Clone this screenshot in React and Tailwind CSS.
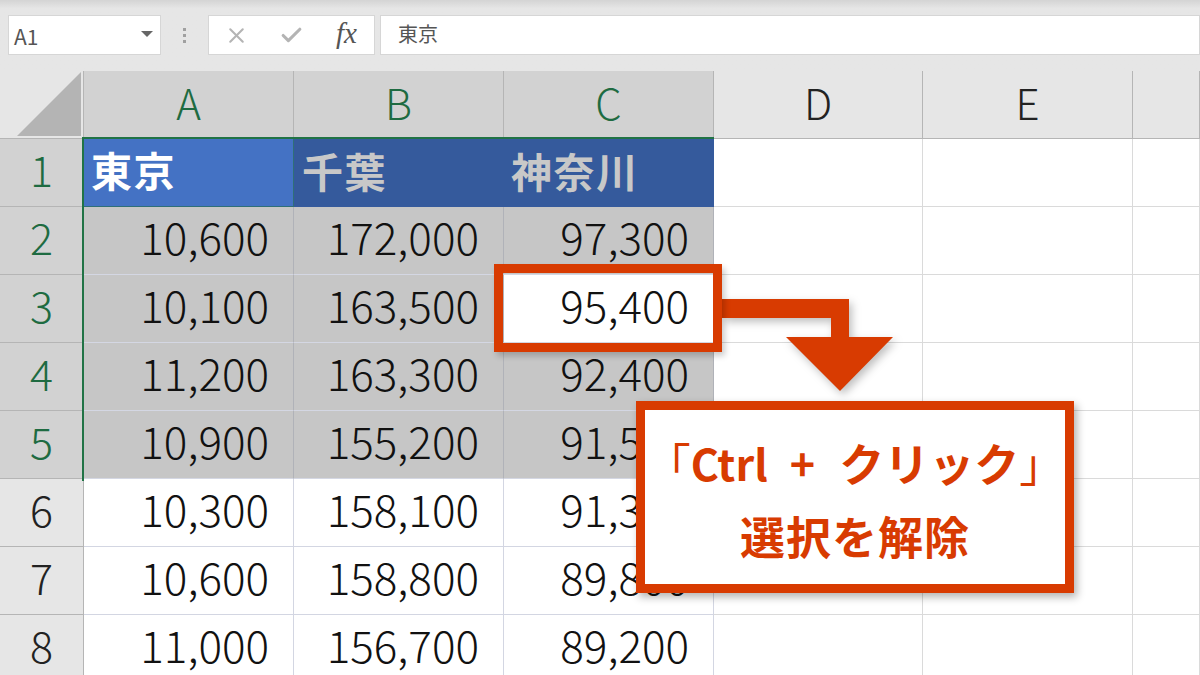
import React from "react";
import { X, Check } from "lucide-react";

const jp = "font-['Noto_Sans_CJK_JP','Noto_Sans',sans-serif]";

const rows = [
  ["10,600", "172,000", "97,300"],
  ["10,100", "163,500", "95,400"],
  ["11,200", "163,300", "92,400"],
  ["10,900", "155,200", "91,500"],
  ["10,300", "158,100", "91,300"],
  ["10,600", "158,800", "89,800"],
  ["11,000", "156,700", "89,200"],
];

const Num = ({ value, selected, white }) => (
  <div
    className={`flex items-center justify-end pr-[24px] pb-[9px] text-[44px] leading-none text-[#111] font-light border-b border-r ${
      selected && !white
        ? "bg-[#c6c6c6] border-b-[#d4d7e3] border-r-[#b0b2b8]"
        : "bg-white border-[#d3d6e2]"
    }`}
  >
    {value}
  </div>
);

const Blank = () => <div className="bg-white border-b border-r border-[#dadada]" />;

const ColHead = ({ label, selected }) => (
  <div
    className={`flex items-center justify-center pb-[6px] text-[42px] leading-none font-light border-r border-b ${
      selected
        ? "bg-[#d2d2d2] text-[#1e6b41] border-[#b5b5b5]"
        : "bg-[#e6e6e6] text-[#222] border-[#b5b5b5]"
    }`}
  >
    {label}
  </div>
);

const RowHead = ({ label, selected }) => (
  <div
    className={`flex items-center justify-center pb-[8px] text-[43px] leading-none font-light border-r border-b border-[#b5b5b5] ${
      selected ? "bg-[#d2d2d2] text-[#1e6b41]" : "bg-[#e6e6e6] text-[#222]"
    }`}
  >
    {label}
  </div>
);

export default function App() {
  return (
    <div className={`relative w-[1200px] h-[675px] overflow-hidden bg-[#e6e6e6] ${jp}`}>
      {/* formula bar */}
      <div className="h-[71px] pt-[15px] bg-gradient-to-b from-[#d4d4d4] from-0% to-[#e6e6e6] to-[12%] flex items-start">
        <div className="ml-[8px] w-[153px] h-[40px] bg-white border border-[#d6d6d6] flex items-center justify-between pl-[5px] pr-[7px]">
          <span className="text-[21px] text-[#555] pt-[3px]">A1</span>
          <span className="w-0 h-0 border-x-[6px] border-x-transparent border-t-[6px] border-t-[#666] mb-[3px]" />
        </div>
        <div className="w-[47px] h-[40px] flex flex-col items-center justify-center gap-[3px]">
          <span className="w-[3px] h-[3px] bg-[#a0a0a0]" />
          <span className="w-[3px] h-[3px] bg-[#a0a0a0]" />
          <span className="w-[3px] h-[3px] bg-[#a0a0a0]" />
        </div>
        <div className="w-[167px] h-[40px] bg-white border border-[#d6d6d6] flex items-center pl-[15px]">
          <X size={25} strokeWidth={2} className="text-[#b4b4b4]" />
          <Check size={25} strokeWidth={3} className="text-[#b4b4b4] ml-[30px]" />
          <span className="ml-[32px] text-[29px] leading-none italic text-[#555] pb-[4px] font-['Liberation_Serif',serif]">fx</span>
        </div>
        <div className="ml-[5px] flex-1 h-[40px] bg-white border border-[#d6d6d6] flex items-center pl-[17px] pb-[2px] text-[20px] text-[#555]">
          東京
        </div>
      </div>

      {/* sheet */}
      <div className="grid grid-cols-[84px_210px_210px_210px_209px_210px_67px] grid-rows-[68px_68px_68px_68px_68px_68px_68px_68px_68px]">
        <div className="bg-[#e6e6e6] border-r border-b border-[#b5b5b5] relative">
          <svg width="64" height="64" className="absolute right-[2px] bottom-[2px]">
            <polygon points="64,0 64,64 0,64" fill="#b4b4b4" />
          </svg>
        </div>
        <ColHead label="A" selected />
        <ColHead label="B" selected />
        <ColHead label="C" selected />
        <ColHead label="D" />
        <ColHead label="E" />
        <ColHead label="" />

        <RowHead label="1" selected />
        <div className="bg-[#4472c4] text-white text-[41px] leading-none font-bold flex items-center pl-[7px] pb-[6px] border-r border-b border-[#2f6f78] tracking-[1.5px]">東京</div>
        <div className="bg-[#355a9c] text-[#c8c8c8] text-[41px] leading-none font-bold flex items-center pl-[8px] pb-[6px] tracking-[1.5px]">千葉</div>
        <div className="bg-[#355a9c] text-[#c8c8c8] text-[41px] leading-none font-bold flex items-center pl-[7px] pb-[6px] tracking-[1.5px]">神奈川</div>
        <Blank />
        <Blank />
        <Blank />

        {rows.map((r, i) => (
          <React.Fragment key={i}>
            <RowHead label={String(i + 2)} selected={i < 4} />
            <Num value={r[0]} selected={i < 4} />
            <Num value={r[1]} selected={i < 4} />
            <Num value={r[2]} selected={i < 4} white={i === 1} />
            <Blank />
            <Blank />
            <Blank />
          </React.Fragment>
        ))}
      </div>

      {/* selection edges */}
      <div className="absolute left-[82px] top-[137px] w-[632px] h-[2px] bg-[#217346]" />
      <div className="absolute left-[82px] top-[137px] w-[2px] h-[344px] bg-[#217346]" />

      {/* connector arrow */}
      <svg width="190" height="110" className="absolute left-[710px] top-[290px] drop-shadow-[3px_4px_4px_rgba(0,0,0,0.25)]">
        <polygon
          points="12,9 139,9 139,47 183,47 130,101 76,47 121,47 121,28 12,28"
          fill="#d83b01"
        />
      </svg>

      {/* highlighted cell */}
      <div className="absolute left-[494px] top-[264px] w-[228px] h-[88px] border-[9px] border-[#d83b01] shadow-[3px_4px_6px_rgba(0,0,0,0.2)]" />

      {/* callout */}
      <div className="absolute left-[636px] top-[401px] w-[438px] h-[192px] bg-white border-[9px] border-[#d83b01] shadow-[3px_4px_8px_rgba(0,0,0,0.3)] flex flex-col items-center text-[#d83b01] font-bold">
        <div className="mt-[25px] h-[54px] flex items-center leading-none whitespace-nowrap">
          <span className="text-[45px] font-normal w-[45px]">「</span>
          <span className="text-[43px]">Ctrl</span>
          <span className="text-[43px] ml-[22px]">+</span>
          <span className="text-[45px] ml-[24px]">クリック</span>
          <span className="text-[45px] font-normal w-[45px]">」</span>
        </div>
        <div className="mt-[20px] text-[45px] leading-[54px] tracking-[1px] whitespace-nowrap">選択を解除</div>
      </div>
    </div>
  );
}
